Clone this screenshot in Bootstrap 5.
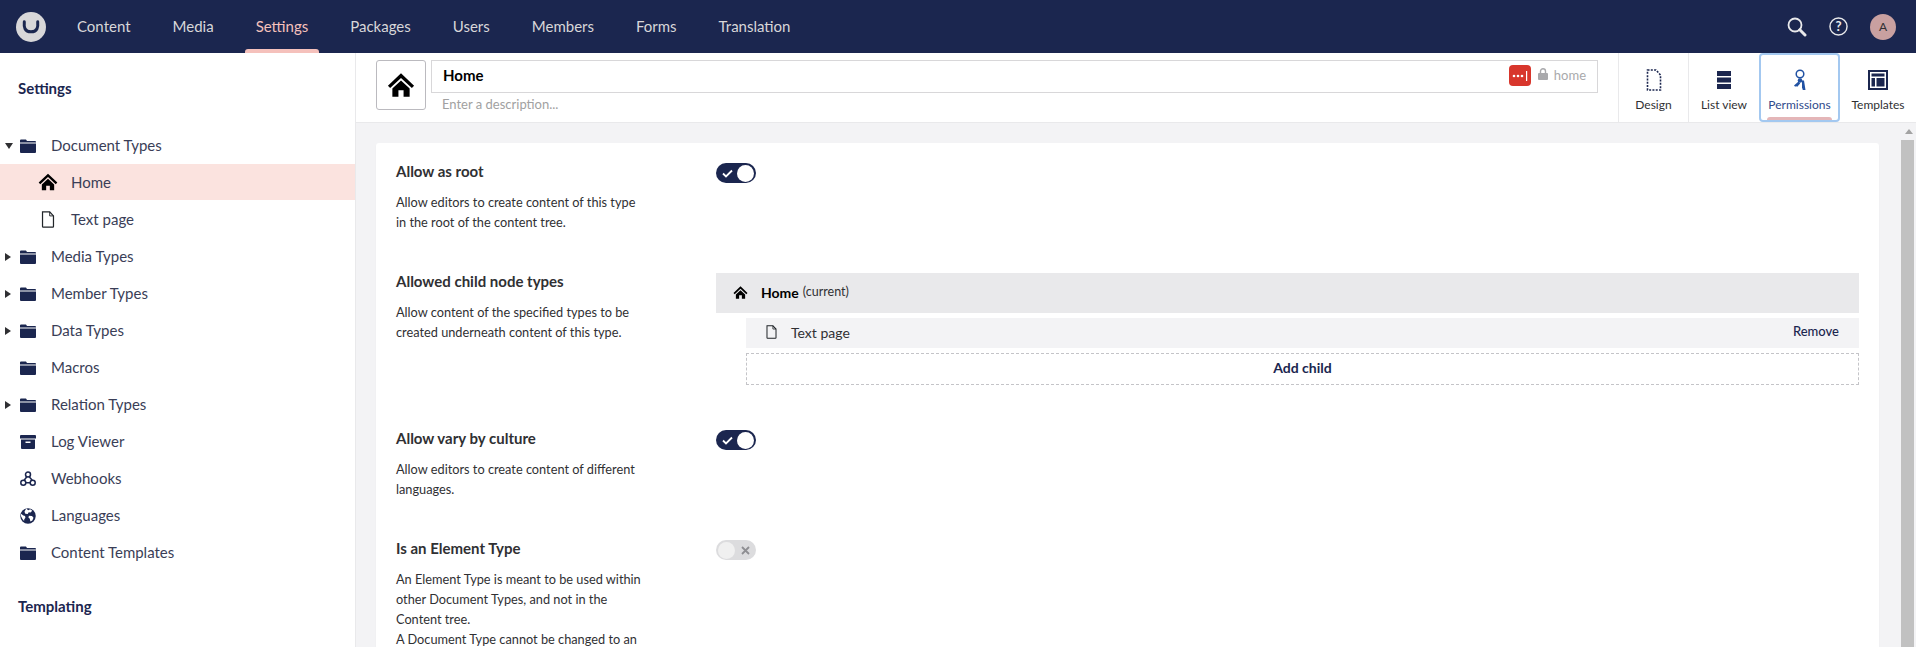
<!DOCTYPE html>
<html lang="en">
<head>
  <meta charset="UTF-8" />
  <title>Settings | Umbraco</title>
  <link href="https://cdn.jsdelivr.net/npm/bootstrap@5.3.3/dist/css/bootstrap.min.css" rel="stylesheet" />
  <style>
    html, body {
      height: 100%;
      margin: 0;
      overflow: hidden;
      font-family: Lato, "Liberation Sans", sans-serif;
      font-size: 15px;
      color: #303033;
    }
    .top-bar { height: 53px; background: #1b264f; padding-left: 16px; padding-right: 20px; }
    .logo-disc { width: 30px; height: 30px; border-radius: 50%; background: #d8d7d9; margin-right: 10px; }
    .sec-item { position: relative; height: 53px; padding: 0 21px; color: #d8d7d9; text-decoration: none; font-size: 15px; }
    .sec-item.is-on { color: #f5c1bc; }
    .sec-item.is-on::after {
      content: ""; position: absolute; left: 10px; right: 10px; bottom: 0; height: 4px;
      background: #f5c1bc; border-radius: 3px 3px 0 0;
    }
    .user-disc { width: 26px; height: 26px; border-radius: 50%; background: #c9a0a0; color: #303033; font-size: 12px; }
    .top-tool { color: #e9e9eb; }
    .tool-gap { margin-right: 22px; }

    .page-body { height: 594px; }
    .side-tree { width: 356px; border-right: 1px solid #e9e9eb; flex-shrink: 0; color: #1b264f; }
    .side-title { font-weight: 700; line-height: 20px; padding-left: 18px; }
    .side-first { padding-top: 25px; margin-bottom: 29px; }
    .side-second { margin-top: 25px; }
    .tree-row { height: 37px; color: #3a3e57; }
    .tree-row.is-sel { background: #fbe3df; height: 36px; margin-bottom: 1px; }
    .tree-caret { width: 20px; flex-shrink: 0; padding-left: 5px; }
    .tree-ico { width: 16px; flex-shrink: 0; margin-right: 15px; color: #1b264f; }
    .tree-sub { padding-left: 39px; }
    .tree-sub svg { width: 18px; margin-right: 14px; flex-shrink: 0; }
    .tree-sub .tree-house { width: 20px; margin: 0 13px 0 -1px; }

    .editor-pane { min-width: 0; }
    .editor-head { height: 70px; border-bottom: 1px solid #e9e9eb; background: #fff; }
    .icon-pick { width: 50px; height: 50px; margin: 7px 5px 0 20px; border: 1px solid #bbbabf; border-radius: 3px; flex-shrink: 0; }
    .name-col { margin: 7px 20px 0 0; min-width: 0; }
    .name-box { height: 33px; border: 1px solid #d8d7d9; padding: 0 11px 2px 11px; color: #000; }
    .name-text { font-weight: 700; font-size: 15px; }
    .name-desc { font-size: 13px; color: #a1a1a1; padding: 1px 0 0 11px; line-height: 20px; }
    .alias-mark { width: 22px; height: 21px; background: #d8362c; border-radius: 4px; margin-right: 7px; }
    .alias-lock { color: #a9a9ac; margin-bottom: 3px; }
    .alias-text { font-size: 13px; color: #a9a9ac; margin-left: 6px; }

    .edit-tab { height: 69px; border-left: 1px solid #e9e9eb; font-size: 12px; color: #303033; position: relative; line-height: 16px; padding-top: 16px; flex-shrink: 0; }
    .edit-tab svg { height: 22px; display: block; margin-bottom: 6px; }
    .tab-a { width: 70px; }
    .tab-b { width: 71px; }
    .tab-c { width: 81px; border: 2px solid #a3c8f0; border-radius: 4px; color: #2f4a8c; padding-top: 14px; }
    .tab-c::after {
      content: ""; position: absolute; left: 6px; right: 6px; bottom: 0; height: 3px;
      background: #e4b6b8; border-radius: 3px 3px 0 0;
    }
    .tab-d { width: 76px; border-left: 0; }

    .work-area { background: #f3f3f5; min-height: 0; overflow: hidden; }
    .work-scroll { padding: 20px 21px 0 20px; min-width: 0; }
    .props-card { background: #fff; border-radius: 3px; box-shadow: 0 1px 1px rgba(0,0,0,.1); padding: 18px 20px 40px; }
    .prop-row { margin-bottom: 39px; }
    .prop-row-wide { margin-bottom: 43px; }
    .prop-left { width: 320px; flex-shrink: 0; }
    .prop-name { font-weight: 700; font-size: 15px; line-height: 20px; margin-bottom: 11px; color: #303033; }
    .prop-help { font-size: 12.75px; line-height: 20px; width: 250px; color: #303033; }
    .toggler { width: 40px; height: 20px; border-radius: 10px; background: #1b264f; margin-top: 2px; padding: 0 2px 0 6px; }
    .toggler-knob { width: 17px; height: 17px; border-radius: 50%; background: #fff; margin-left: auto; }
    .toggler.is-off { background: #dcdcde; padding: 0 6px 0 2px; }
    .toggler.is-off .toggler-knob { background: #f0f0f0; margin: 0 auto 0 0; }

    .child-head { height: 40px; margin-top: 2px; background: #e9e9eb; padding: 0 0 2px 17px; font-size: 14px; color: #000; }
    .child-head b { margin-left: 13px; }
    .child-head small { font-size: 12.5px; color: #303033; margin-left: 4px; }
    .child-list { padding-left: 30px; }
    .child-row { height: 30px; background: #f3f3f5; margin-top: 5px; padding: 0 20px 2px 20px; font-size: 14px; }
    .child-row svg { margin-right: 14px; }
    .child-remove { color: #1b264f; font-size: 13px; font-weight: 500; margin-left: auto; }
    .child-add { height: 32px; margin-top: 5px; padding-bottom: 3px; border: 1px dashed #c4c4c8; font-size: 14px; font-weight: 700; color: #1b264f; }

    .fake-scroll { width: 16px; flex-shrink: 0; padding-left: 1px; }
    .fake-scroll-up { height: 17px; }
    .fake-scroll-thumb { width: 13px; background: #c1c1c1; }
  </style>
</head>
<body>
  <svg width="0" height="0" class="position-absolute">
    <symbol id="i-home" viewBox="0 0 24 24">
      <path fill="currentColor" d="M12 2 .8 12.600l1.900 2L12 5.900l9.300 8.700 1.900-2z"/>
      <path fill="currentColor" d="M12 8.200 4.600 15.100V22h5.200v-5.500h4.400V22h5.200v-6.900z"/>
    </symbol>
    <symbol id="i-folder" viewBox="0 0 16 14">
      <path fill="currentColor" d="M0 1.500Q0 .5 1 .5h5L7 2h8q1 0 1 1v.6H0z"/>
      <path fill="currentColor" d="M0 4.600h16V13q0 1-1 1H1q-1 0-1-1z"/>
    </symbol>
    <symbol id="i-doc" viewBox="0 0 14 18">
      <path fill="none" stroke="currentColor" stroke-width="1.300" d="M1.200 1h7.600l4 4.200v11.100a.7.7 0 0 1-.7.700H1.900a.7.7 0 0 1-.7-.7z"/>
      <path fill="none" stroke="currentColor" stroke-width="1" d="M8.800 1v4.200h4"/>
    </symbol>
    <symbol id="i-box" viewBox="0 0 16 14">
      <path fill="currentColor" d="M0 1q0-1 1-1h14q1 0 1 1v2.500H0z"/>
      <path fill="currentColor" fill-rule="evenodd" d="M1 4.600h14V13q0 1-1 1H2q-1 0-1-1zM5.500 6.500v1.500h5V6.500z"/>
    </symbol>
    <symbol id="i-hooks" viewBox="0 0 16 16">
      <g fill="none" stroke="currentColor" stroke-width="1.500">
        <circle cx="8" cy="3.600" r="2.500"/><circle cx="3.300" cy="11.800" r="2.500"/><circle cx="12.700" cy="11.800" r="2.500"/>
        <path d="M6.800 5.800 4 9.500M9.200 5.800l3.200 3.700M5.800 11.800h4.400"/>
      </g>
    </symbol>
    <symbol id="i-globe" viewBox="0 0 18 18">
      <circle cx="9" cy="9" r="8.700" fill="currentColor"/>
      <path fill="#fff" d="M7 .7 9.200 2.500 11.500 1.500 13.800 3 11.800 5 9.800 4.800 8.700 6.800 6 6.500 5 4.200zM10 8.600l3.500.4 1.700 1.900-1.300 3.200-2.200 1-.7-3-1.500-1.500zM1.200 6.500l2.500 1.800 2 .6.400 2-1.300 1.700-.2 2L2.800 12.500 1 9z"/>
    </symbol>
    <symbol id="i-lock" viewBox="0 0 10 12">
      <path fill="currentColor" d="M1 5h8q1 0 1 1v5q0 1-1 1H1q-1 0-1-1V6q0-1 1-1z"/>
      <path fill="none" stroke="currentColor" stroke-width="1.400" d="M2.500 5.500V3.300a2.500 2.500 0 0 1 5 0v2.200"/>
    </symbol>
  </svg>

  <!-- top navigation -->
  <nav class="top-bar d-flex align-items-center">
    <div class="logo-disc d-flex align-items-center justify-content-center">
      <svg width="18" height="14" viewBox="0 0 18 14"><path fill="none" stroke="#1b264f" stroke-width="3" stroke-linecap="round" d="M2.300 1.800C1.800 7 2.500 11.800 9 11.800s7.200-4.800 6.700-10"/></svg>
    </div>
    <a class="sec-item d-flex align-items-center" href="#">Content</a>
    <a class="sec-item d-flex align-items-center" href="#">Media</a>
    <a class="sec-item is-on d-flex align-items-center" href="#">Settings</a>
    <a class="sec-item d-flex align-items-center" href="#">Packages</a>
    <a class="sec-item d-flex align-items-center" href="#">Users</a>
    <a class="sec-item d-flex align-items-center" href="#">Members</a>
    <a class="sec-item d-flex align-items-center" href="#">Forms</a>
    <a class="sec-item d-flex align-items-center" href="#">Translation</a>
    <div class="ms-auto d-flex align-items-center top-tool">
      <svg class="tool-gap" width="20" height="20" viewBox="0 0 20 20"><circle cx="8" cy="8" r="6.500" fill="none" stroke="currentColor" stroke-width="1.800"/><path d="m12.800 12.800 5.200 5.200" stroke="currentColor" stroke-width="3" stroke-linecap="round"/></svg>
      <svg class="tool-gap" width="19" height="19" viewBox="0 0 20 20"><circle cx="10" cy="10" r="9" fill="none" stroke="currentColor" stroke-width="1.500"/><text x="10" y="15" text-anchor="middle" font-size="14" font-weight="700" font-family="Lato, sans-serif" fill="currentColor">?</text></svg>
      <div class="user-disc d-flex align-items-center justify-content-center">A</div>
    </div>
  </nav>

  <div class="page-body d-flex">
    <!-- settings tree -->
    <aside class="side-tree">
      <div class="side-title side-first">Settings</div>
      <div class="tree-row d-flex align-items-center">
        <span class="tree-caret"><svg width="8" height="6" viewBox="0 0 8 6" class="d-block"><path d="M0 0h8L4 6z" fill="#303033"/></svg></span>
        <svg class="tree-ico" height="14"><use href="#i-folder"/></svg>Document Types
      </div>
      <div class="tree-row is-sel tree-sub d-flex align-items-center">
        <svg height="20" class="tree-house text-black"><use href="#i-home"/></svg>Home
      </div>
      <div class="tree-row tree-sub d-flex align-items-center">
        <svg height="17" class="text-dark"><use href="#i-doc"/></svg>Text page
      </div>
      <div class="tree-row d-flex align-items-center">
        <span class="tree-caret"><svg width="6" height="8" viewBox="0 0 6 8" class="d-block"><path d="M0 0v8l6-4z" fill="#303033"/></svg></span>
        <svg class="tree-ico" height="14"><use href="#i-folder"/></svg>Media Types
      </div>
      <div class="tree-row d-flex align-items-center">
        <span class="tree-caret"><svg width="6" height="8" viewBox="0 0 6 8" class="d-block"><path d="M0 0v8l6-4z" fill="#303033"/></svg></span>
        <svg class="tree-ico" height="14"><use href="#i-folder"/></svg>Member Types
      </div>
      <div class="tree-row d-flex align-items-center">
        <span class="tree-caret"><svg width="6" height="8" viewBox="0 0 6 8" class="d-block"><path d="M0 0v8l6-4z" fill="#303033"/></svg></span>
        <svg class="tree-ico" height="14"><use href="#i-folder"/></svg>Data Types
      </div>
      <div class="tree-row d-flex align-items-center">
        <span class="tree-caret"></span>
        <svg class="tree-ico" height="14"><use href="#i-folder"/></svg>Macros
      </div>
      <div class="tree-row d-flex align-items-center">
        <span class="tree-caret"><svg width="6" height="8" viewBox="0 0 6 8" class="d-block"><path d="M0 0v8l6-4z" fill="#303033"/></svg></span>
        <svg class="tree-ico" height="14"><use href="#i-folder"/></svg>Relation Types
      </div>
      <div class="tree-row d-flex align-items-center">
        <span class="tree-caret"></span>
        <svg class="tree-ico" height="14"><use href="#i-box"/></svg>Log Viewer
      </div>
      <div class="tree-row d-flex align-items-center">
        <span class="tree-caret"></span>
        <svg class="tree-ico" height="16"><use href="#i-hooks"/></svg>Webhooks
      </div>
      <div class="tree-row d-flex align-items-center">
        <span class="tree-caret"></span>
        <svg class="tree-ico" height="18"><use href="#i-globe"/></svg>Languages
      </div>
      <div class="tree-row d-flex align-items-center">
        <span class="tree-caret"></span>
        <svg class="tree-ico" height="14"><use href="#i-folder"/></svg>Content Templates
      </div>
      <div class="side-title side-second">Templating</div>
    </aside>

    <main class="editor-pane flex-grow-1 d-flex flex-column">
      <!-- doc type header -->
      <header class="editor-head d-flex flex-shrink-0">
        <div class="icon-pick d-flex align-items-center justify-content-center text-black">
          <svg width="28" height="28"><use href="#i-home"/></svg>
        </div>
        <div class="name-col flex-grow-1">
          <div class="name-box d-flex align-items-center">
            <span class="name-text flex-grow-1">Home</span>
            <span class="alias-mark d-flex align-items-center justify-content-center">
              <svg width="16" height="10" viewBox="0 0 16 10"><g fill="#fff"><circle cx="2" cy="5" r="1.300"/><circle cx="6" cy="5" r="1.300"/><circle cx="10" cy="5" r="1.300"/><rect x="14" y="0" width="1.200" height="10"/></g></svg>
            </span>
            <svg width="10" height="12" class="alias-lock"><use href="#i-lock"/></svg>
            <span class="alias-text">home</span>
          </div>
          <div class="name-desc">Enter a description...</div>
        </div>
        <div class="edit-tab tab-a d-flex flex-column align-items-center">
          <svg width="16" viewBox="0 0 16 22"><path fill="none" stroke="#1b264f" stroke-width="1.600" stroke-dasharray="2 1.300" d="M1.500 1h8.500l4.500 5v15h-13z"/></svg>
          Design
        </div>
        <div class="edit-tab tab-b d-flex flex-column align-items-center">
          <svg width="14" viewBox="0 0 14 22"><g fill="#1b264f"><rect y="2" width="14" height="5"/><rect y="8.500" width="14" height="5"/><rect y="15" width="14" height="5"/></g></svg>
          List view
        </div>
        <div class="edit-tab tab-c d-flex flex-column align-items-center">
          <svg width="14" viewBox="0 0 14 22">
            <circle cx="7" cy="5" r="3.800" fill="none" stroke="#2152a3" stroke-width="1.500"/>
            <path d="M5.500 12.500 1 16.500l1.200 1.300 1-.8.800.9 3.200-3.400z" fill="#2152a3"/>
            <circle cx="7" cy="11.500" r="2.300" fill="#2152a3"/>
            <path d="M9 11.500h2l1.500 9.500H9.800L9 18.500V16z" fill="#2152a3"/>
          </svg>
          Permissions
        </div>
        <div class="edit-tab tab-d d-flex flex-column align-items-center">
          <svg width="20" viewBox="0 0 20 22"><g fill="#1b264f"><path fill-rule="evenodd" d="M0 1h20v20H0zM2 3v16h16V3z"/><rect x="3.500" y="4.500" width="13" height="3"/><rect x="3.500" y="9" width="3.500" height="8.500"/><rect x="8.500" y="9" width="8" height="8.500"/></g></svg>
          Templates
        </div>
      </header>

      <div class="work-area flex-grow-1 d-flex">
        <div class="work-scroll flex-grow-1">
          <div class="props-card">
            <div class="prop-row d-flex">
              <div class="prop-left">
                <div class="prop-name">Allow as root</div>
                <div class="prop-help">Allow editors to create content of this type in the root of the content tree.</div>
              </div>
              <div class="toggler d-flex align-items-center">
                <svg width="11" height="9" viewBox="0 0 11 9"><path d="m1 4.500 3 3 6-6" fill="none" stroke="#fff" stroke-width="1.800"/></svg>
                <span class="toggler-knob"></span>
              </div>
            </div>

            <div class="prop-row-wide d-flex">
              <div class="prop-left">
                <div class="prop-name">Allowed child node types</div>
                <div class="prop-help">Allow content of the specified types to be created underneath content of this type.</div>
              </div>
              <div class="flex-grow-1">
                <div class="child-head d-flex align-items-center">
                  <svg width="15" height="15" class="text-black"><use href="#i-home"/></svg>
                  <b>Home</b><small>(current)</small>
                </div>
                <div class="child-list">
                  <div class="child-row d-flex align-items-center">
                    <svg width="11" height="14" class="text-dark"><use href="#i-doc"/></svg>
                    <span>Text page</span>
                    <span class="child-remove">Remove</span>
                  </div>
                  <div class="child-add d-flex align-items-center justify-content-center">Add child</div>
                </div>
              </div>
            </div>

            <div class="prop-row d-flex">
              <div class="prop-left">
                <div class="prop-name">Allow vary by culture</div>
                <div class="prop-help">Allow editors to create content of different languages.</div>
              </div>
              <div class="toggler d-flex align-items-center">
                <svg width="11" height="9" viewBox="0 0 11 9"><path d="m1 4.500 3 3 6-6" fill="none" stroke="#fff" stroke-width="1.800"/></svg>
                <span class="toggler-knob"></span>
              </div>
            </div>

            <div class="prop-row d-flex">
              <div class="prop-left">
                <div class="prop-name">Is an Element Type</div>
                <div class="prop-help">An Element Type is meant to be used within other Document Types, and not in the Content tree.<br />A Document Type cannot be changed to an</div>
              </div>
              <div class="toggler is-off d-flex align-items-center">
                <span class="toggler-knob"></span>
                <svg width="9" height="9" viewBox="0 0 9 9"><path d="m1 1 7 7M8 1 1 8" stroke="#8e8e92" stroke-width="1.800"/></svg>
              </div>
            </div>
          </div>
        </div>
        <div class="fake-scroll">
          <div class="fake-scroll-up d-flex align-items-center justify-content-center">
            <svg width="8" height="5" viewBox="0 0 8 5"><path d="M4 0 8 5H0z" fill="#a3a3a3"/></svg>
          </div>
          <div class="fake-scroll-thumb h-100"></div>
        </div>
      </div>
    </main>
  </div>
<script src="https://cdn.jsdelivr.net/npm/bootstrap@5.3.3/dist/js/bootstrap.bundle.min.js"></script>
</body>
</html>
